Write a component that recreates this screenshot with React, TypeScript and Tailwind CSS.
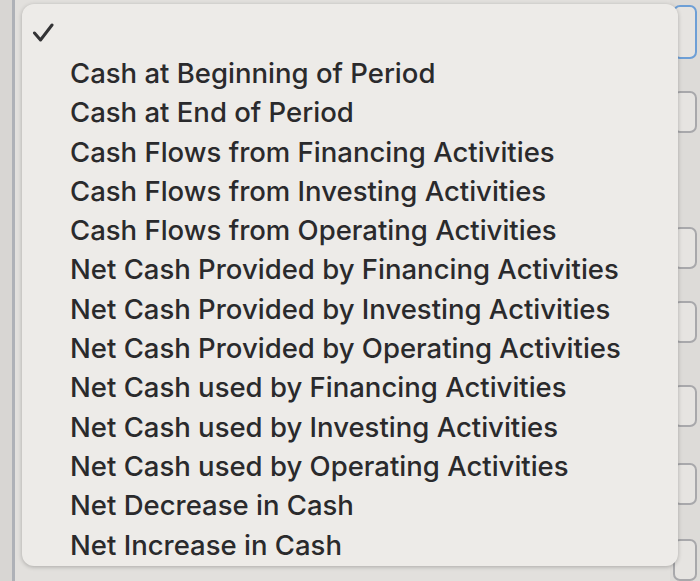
import React from "react";

const options = [
  "Cash at Beginning of Period",
  "Cash at End of Period",
  "Cash Flows from Financing Activities",
  "Cash Flows from Investing Activities",
  "Cash Flows from Operating Activities",
  "Net Cash Provided by Financing Activities",
  "Net Cash Provided by Investing Activities",
  "Net Cash Provided by Operating Activities",
  "Net Cash used by Financing Activities",
  "Net Cash used by Investing Activities",
  "Net Cash used by Operating Activities",
  "Net Decrease in Cash",
  "Net Increase in Cash",
];

// select boxes of the form underneath the open menu
const fields = [
  { h: "h-[56px]", mt: "mt-[5px]", active: true },
  { h: "h-[44px]", mt: "mt-[32px]", active: false },
  { h: "h-[44px]", mt: "mt-[94px]", active: false },
  { h: "h-[44px]", mt: "mt-[32px]", active: false },
  { h: "h-[44px]", mt: "mt-[42px]", active: false },
  { h: "h-[44px]", mt: "mt-[36px]", active: false },
  { h: "h-[44px]", mt: "mt-[34px]", active: false },
];

export default function App() {
  return (
    <div
      className="relative w-[700px] h-[581px] overflow-hidden bg-[#dddbd8]"
      style={{ fontFamily: "Inter, 'Liberation Sans', sans-serif" }}
    >
      {/* page behind the menu */}
      <div className="flex h-full">
        <div className="w-[12px] bg-[#d8d6d3]" />
        <div className="w-[3px] bg-[#aeb1b7]" />
        <div className="flex-1 bg-[#e2e0dd]" />
        <div className="flex w-[30px] flex-col items-end pr-[3px]">
          {fields.map((f, i) => (
            <div
              key={i}
              className={`${f.h} ${f.mt} w-[24px] rounded-[7px] border-2 bg-[#e6e4e1] ${
                f.active ? "border-[#6d9fd6]" : "border-[#a8a8ab]"
              }`}
            />
          ))}
        </div>
      </div>

      {/* open dropdown menu */}
      <div className="absolute left-[22px] top-[4px] w-[656px] h-[562px] rounded-[12px] bg-[#edebe8] shadow-[0_1px_4px_rgba(0,0,0,0.25)]">
        <svg
          className="absolute left-[10px] top-[18px]"
          width="22"
          height="21"
          viewBox="0 0 22 21"
          fill="none"
        >
          <path
            d="M2.5 11 L8.5 18 L20 3"
            stroke="#333335"
            strokeWidth="3"
            strokeLinecap="round"
            strokeLinejoin="round"
          />
        </svg>
        <ul className="pt-[50px] pl-[48px] text-[27.5px] font-medium leading-[39.3px] text-[#2a2a2c]">
          {options.map((o) => (
            <li key={o} className="whitespace-nowrap">
              {o}
            </li>
          ))}
        </ul>
      </div>
    </div>
  );
}
